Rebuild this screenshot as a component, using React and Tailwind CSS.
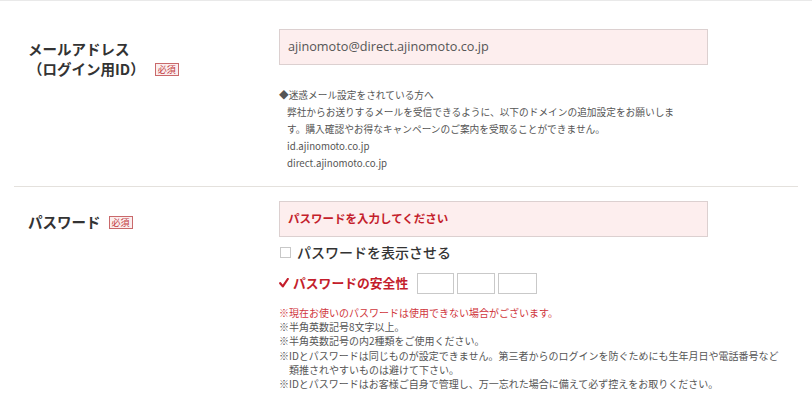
import React from "react";

function Badge() {
  return (
    <span className="inline-flex items-center justify-center w-[24px] h-[13px] border border-[#c9696b] bg-[#fbeeee] text-[#c23a3f] text-[9px] leading-none font-normal">
      必須
    </span>
  );
}

export default function App() {
  return (
    <div className="w-[812px] h-[419px] bg-white border-t border-[#e9e9e9] overflow-hidden font-['Noto_Sans_CJK_JP',sans-serif] text-[#333]">
      {/* email row */}
      <div className="mx-[14px] flex border-b border-[#e4e1dd] pt-[28px] pb-[14px]">
        <div className="w-[265px] shrink-0 pl-[14px] pt-[10px] font-bold text-[14.5px] leading-[20px] text-[#333]">
          <div>メールアドレス</div>
          <div className="flex items-center gap-[10px]">
            <span>（ログイン用ID）</span>
            <Badge />
          </div>
        </div>
        <div>
          <div className="w-[429px] h-[36px] border border-[#dcd0d0] bg-[#fdeeee] flex items-center px-[8px] text-[12.7px] text-[#555] font-['Open_Sans',sans-serif]">
            ajinomoto@direct.ajinomoto.co.jp
          </div>
          <div className="mt-[22px] text-[9.7px] leading-[17px] text-[#555]">
            <div>◆迷惑メール設定をされている方へ</div>
            <div className="pl-[8px]">
              弊社からお送りするメールを受信できるように、以下のドメインの追加設定をお願いしま
              <br />
              す。購入確認やお得なキャンペーンのご案内を受取ることができません。
              <br />
              id.ajinomoto.co.jp
              <br />
              direct.ajinomoto.co.jp
            </div>
          </div>
        </div>
      </div>

      {/* password row */}
      <div className="mx-[14px] flex pt-[14px]">
        <div className="w-[265px] shrink-0 pl-[14px] pt-[11px] font-bold text-[14.5px] leading-[20px]">
          <div className="flex items-center gap-[8px]">
            <span>パスワード</span>
            <Badge />
          </div>
        </div>
        <div>
          <div className="w-[429px] h-[36px] border border-[#dcd0d0] bg-[#fdeeee] flex items-center px-[8px] text-[11.5px] font-bold text-[#c41e2c]">
            パスワードを入力してください
          </div>
          <label className="mt-[4px] h-[22px] flex items-center">
            <span className="w-[11px] h-[11px] border border-[#c8c8c8] bg-white ml-[1px]" />
            <span className="ml-[6px] text-[14px] font-medium text-[#333]">パスワードを表示させる</span>
          </label>
          <div className="mt-[9px] h-[22px] flex items-center">
            <svg width="10" height="10" viewBox="0 0 10 10">
              <path d="M1.2 5.2 L3.8 8.4 L8.8 1" fill="none" stroke="#c41e2c" strokeWidth="2.2" strokeLinecap="round" strokeLinejoin="round" />
            </svg>
            <span className="ml-[4px] text-[12.8px] font-bold text-[#c41e2c]">パスワードの安全性</span>
            <div className="ml-[9px] flex gap-[3px]">
              <span className="w-[37px] h-[21px] border border-[#c9c9c9]" />
              <span className="w-[38px] h-[21px] border border-[#c9c9c9]" />
              <span className="w-[39px] h-[21px] border border-[#c9c9c9]" />
            </div>
          </div>
          <div className="mt-[12px] text-[10px] leading-[14.2px] text-[#555] whitespace-nowrap">
            <div className="text-[#d0363c]">※現在お使いのパスワードは使用できない場合がございます。</div>
            <div>※半角英数記号8文字以上。</div>
            <div>※半角英数記号の内2種類をご使用ください。</div>
            <div>※IDとパスワードは同じものが設定できません。第三者からのログインを防ぐためにも生年月日や電話番号など</div>
            <div className="pl-[10px]">類推されやすいものは避けて下さい。</div>
            <div>※IDとパスワードはお客様ご自身で管理し、万一忘れた場合に備えて必ず控えをお取りください。</div>
          </div>
        </div>
      </div>
    </div>
  );
}
